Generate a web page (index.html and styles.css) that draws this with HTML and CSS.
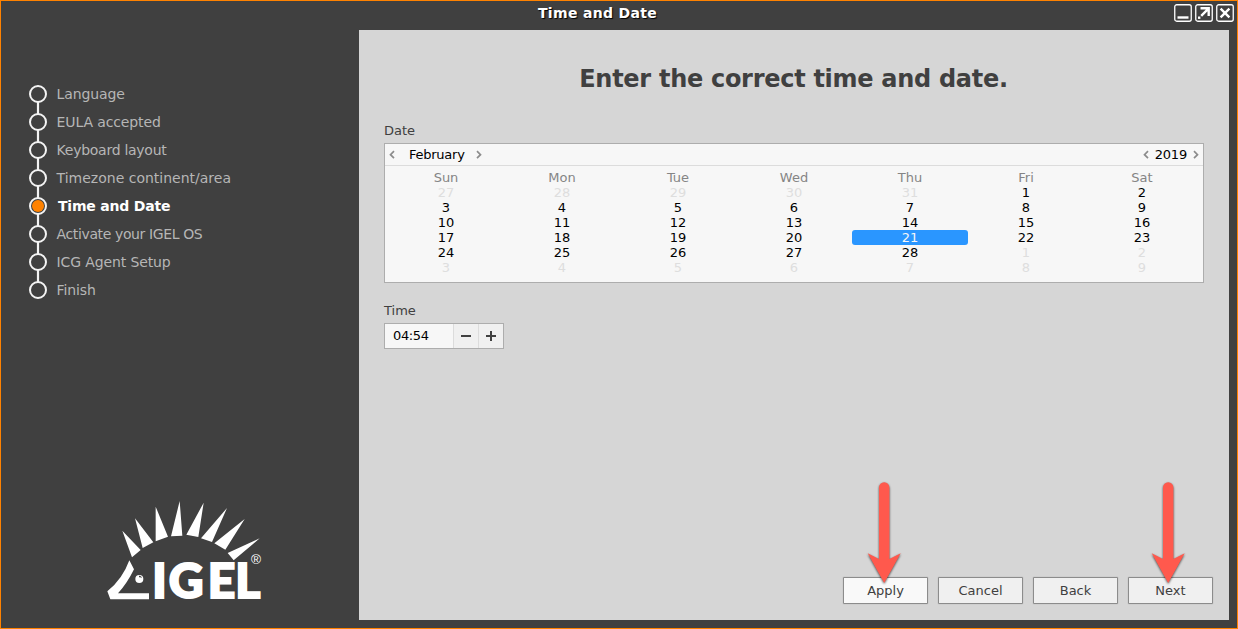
FILE: index.html
```
<!DOCTYPE html>
<html lang="en">
<head>
<meta charset="utf-8">
<title>Time and Date</title>
<link rel="stylesheet" href="styles.css">
</head>
<body>
<div class="window">
  <header class="titlebar">
    <h1 class="window-title">Time and Date</h1>
    <div class="controls">
      <svg class="control" viewBox="0 0 18 18"><rect class="frame" x=".75" y=".75" width="16.5" height="16.5" rx="2"/><path class="stroke" d="M3.5 13.5h11"/></svg>
      <svg class="control" viewBox="0 0 18 18"><rect class="frame" x=".75" y=".75" width="16.5" height="16.5" rx="2"/><path class="stroke" d="M5.5 4.3h8.2v7.7M13.2 4.8L6.2 11.8"/><path class="fill" d="M3 12.5h2.4v2.4H3z"/></svg>
      <svg class="control" viewBox="0 0 18 18"><rect class="frame" x=".75" y=".75" width="16.5" height="16.5" rx="2"/><path class="stroke" d="M4.6 4.6l8.8 8.8M13.4 4.6l-8.8 8.8"/></svg>
    </div>
  </header>
  <div class="content">
    <aside class="sidebar">
      <ol class="steps">
        <li class="step">Language</li>
        <li class="step">EULA accepted</li>
        <li class="step tight">Keyboard layout</li>
        <li class="step wide">Timezone continent/area</li>
        <li class="step current">Time and Date</li>
        <li class="step tighter">Activate your IGEL OS</li>
        <li class="step">ICG Agent Setup</li>
        <li class="step">Finish</li>
      </ol>
      <svg class="logo" viewBox="0 0 570 375">
        <path d="M97 122L152 180L126 202ZM135 85L190 157L158 174ZM197 50L234 140L197 154ZM269 33L277 137L243 139ZM341 38L325 141L289 134ZM411 54L366 156L333 145ZM464 87L406 179L373 160ZM509 145L431 211L413 189Z"/>
        <path d="M118 211L132 238Q111 281 84 310H177V328H61L52 304Q98 267 118 211Z"/>
        <circle cx="148" cy="267" r="12"/>
        <path class="glint" d="M147 257q8-1 9 8q-4-5-9-3z"/>
        <text class="brand" y="325" x="187 236 353 436">IGEL<tspan class="registered" x="483" y="222">®</tspan></text>
      </svg>
    </aside>
    <main class="panel">
      <h2 class="heading">Enter the correct time and date.</h2>
      <div class="label">Date</div>
      <section class="calendar">
        <div class="calendar-nav">
          <svg class="chevron" viewBox="0 0 6 10"><path d="M5 1.2L1.5 4.7L5 8.2"/></svg>
          <span class="month">February</span>
          <svg class="chevron" viewBox="0 0 6 10"><path d="M1 1.2L4.5 4.7L1 8.2"/></svg>
          <svg class="chevron year-prev" viewBox="0 0 6 10"><path d="M5 1.2L1.5 4.7L5 8.2"/></svg>
          <span class="year">2019</span>
          <svg class="chevron" viewBox="0 0 6 10"><path d="M1 1.2L4.5 4.7L1 8.2"/></svg>
        </div>
        <div class="weekdays"><span>Sun</span><span>Mon</span><span>Tue</span><span>Wed</span><span>Thu</span><span>Fri</span><span>Sat</span></div>
        <div class="days">
          <span class="other">27</span><span class="other">28</span><span class="other">29</span><span class="other">30</span><span class="other">31</span><span>1</span><span>2</span>
          <span>3</span><span>4</span><span>5</span><span>6</span><span>7</span><span>8</span><span>9</span>
          <span>10</span><span>11</span><span>12</span><span>13</span><span>14</span><span>15</span><span>16</span>
          <span>17</span><span>18</span><span>19</span><span>20</span><span class="selected">21</span><span>22</span><span>23</span>
          <span>24</span><span>25</span><span>26</span><span>27</span><span>28</span><span class="other">1</span><span class="other">2</span>
          <span class="other">3</span><span class="other">4</span><span class="other">5</span><span class="other">6</span><span class="other">7</span><span class="other">8</span><span class="other">9</span>
        </div>
      </section>
      <div class="label time-label">Time</div>
      <div class="spinner">
        <span class="spinner-value">04:54</span>
        <span class="spinner-button"><svg viewBox="0 0 10 10"><path d="M0 5H10"/></svg></span>
        <span class="spinner-button"><svg viewBox="0 0 10 10"><path d="M0 5H10M5 0V10"/></svg></span>
      </div>
      <footer class="actions">
        <div class="button focused">Apply<svg class="arrow" viewBox="0 0 40 110"><path d="M15 10.5a5.2 5.2 0 0 1 10.4 0V82L36.7 76.3L20.2 106L3.7 76.3L15 82Z"/></svg></div>
        <div class="button">Cancel</div>
        <div class="button">Back</div>
        <div class="button">Next<svg class="arrow next-arrow" viewBox="0 0 40 110"><path d="M15 10.5a5.2 5.2 0 0 1 10.4 0V82L36.7 76.3L20.2 106L3.7 76.3L15 82Z"/></svg></div>
      </footer>
    </main>
  </div>
</div>
</body>
</html>
```

FILE: styles.css
```
*, *::before, *::after { box-sizing: border-box; }

body {
  margin: 0;
  font-family: "DejaVu Sans", sans-serif;
  font-size: 13px;
  color: #404040;
}

.window {
  width: 1238px;
  height: 629px;
  border: 1px solid #ff8200;
  background: #404040;
  display: flex;
  flex-direction: column;
  overflow: hidden;
}

.titlebar {
  height: 29px;
  flex: none;
  display: flex;
  justify-content: space-between;
  align-items: flex-start;
  padding: 3px 3px 0 537px;
}

.window-title {
  margin: 0;
  font-size: 14px;
  letter-spacing: .32px;
  line-height: 19px;
  color: #fff;
  text-shadow: 1px 1px 1px #000;
  white-space: nowrap;
}

.controls { display: flex; gap: 3px; }
.control { width: 18px; height: 18px; }
.frame { fill: none; stroke: #fff; stroke-width: 1.3; }
.stroke { fill: none; stroke: #fff; stroke-width: 2.4; }
.fill { fill: #fff; }

.content { flex: 1; display: flex; min-height: 0; }

.sidebar {
  width: 358px;
  flex: none;
  display: flex;
  flex-direction: column;
  justify-content: space-between;
  padding: 50px 0 13px;
}

.steps {
  list-style: none;
  margin: 0;
  padding: 0 0 0 28px;
  font-size: 14px;
  letter-spacing: -.12px;
  color: #b6b6b6;
}

.step {
  height: 28px;
  display: flex;
  align-items: center;
  position: relative;
}

.step::before {
  content: "";
  width: 18px;
  height: 18px;
  margin-right: 9.6px;
  border: 2px solid #f4f4f4;
  border-radius: 50%;
}

.step:not(:last-child)::after {
  content: "";
  position: absolute;
  left: 8px;
  top: 22px;
  width: 2px;
  height: 12px;
  background: #f4f4f4;
  box-shadow: 0 0 1px #f4f4f4;
}

.tight { letter-spacing: -.27px; }
.tighter { letter-spacing: -.38px; }
.wide { letter-spacing: 0; }
.current { color: #fff; font-weight: bold; letter-spacing: -.2px; }
.step.current::before { background: #ff8200; background-clip: content-box; padding: 1px; margin-right: 11px; }

.logo { width: 190px; height: 125px; margin-left: 89px; fill: #fff; flex: none; }
.glint { fill: #404040; }
.brand { font-family: Lato, sans-serif; font-weight: 900; font-size: 144px; stroke: #fff; stroke-width: 6px; }
.registered { font-family: "Liberation Sans", sans-serif; font-weight: 400; font-size: 41px; stroke-width: 0; }

.panel {
  width: 870px;
  height: 590px;
  background: #d6d6d6;
  padding: 35px 25px 16px;
  display: flex;
  flex-direction: column;
}

.heading {
  margin: 0 1px 29px 0;
  font-size: 24px;
  letter-spacing: -.29px;
  line-height: 28px;
  text-align: center;
}

.label { line-height: 18px; margin-bottom: 3px; }
.time-label { margin-top: 19px; }

.calendar {
  width: 820px;
  height: 140px;
  background: #f7f7f7;
  border: 1px solid #adadad;
  color: #000;
}

.calendar-nav {
  display: flex;
  align-items: center;
  height: 22px;
  padding: 0 4px;
  border-bottom: 1px solid #dcdcdc;
}

.chevron { width: 6px; height: 10px; fill: none; stroke: #8c8c8c; stroke-width: 1.7; }
.month { margin: 0 11px 0 14px; letter-spacing: -.25px; }
.year-prev { margin-left: auto; }
.year { margin: 0 6px; letter-spacing: -.2px; }

.weekdays, .days {
  display: grid;
  grid-template-columns: repeat(7, 116px);
  margin-left: 3px;
  text-align: center;
  line-height: 15px;
}

.weekdays { color: #858585; padding-top: 4px; }
.days span { border-radius: 3px; }
.other { color: #dedede; }
.days .selected { background: #2a96ff; color: #f7f7f7; }

.spinner {
  width: 120px;
  height: 26px;
  display: flex;
  border: 1px solid #adadad;
  background: #f7f7f7;
  color: #000;
}

.spinner-value { flex: 1; padding-left: 8px; line-height: 24px; letter-spacing: -.35px; }

.spinner-button {
  width: 25px;
  display: flex;
  align-items: center;
  justify-content: center;
  background: #f0f0f0;
  border-left: 1px solid #dcdcdc;
}

.spinner-button svg { width: 10px; height: 10px; fill: none; stroke: #404040; stroke-width: 2; }

.actions {
  margin-top: auto;
  margin-right: -9px;
  display: flex;
  justify-content: flex-end;
  gap: 10px;
}

.button {
  position: relative;
  width: 85px;
  height: 27px;
  border: 1px solid #8c8c8c;
  border-radius: 1px;
  background: #f0f0f0;
  text-align: center;
  line-height: 25px;
  box-shadow: 0 0 1px #8c8c8c;
}

.focused { background: #f9f9f9; }

.arrow {
  position: absolute;
  left: 20px;
  bottom: 16px;
  width: 40px;
  height: 110px;
  overflow: visible;
  fill: #ff594d;
  filter: drop-shadow(0 1px 1px rgba(0, 0, 0, .65));
}

.next-arrow { left: 19px; }
```
